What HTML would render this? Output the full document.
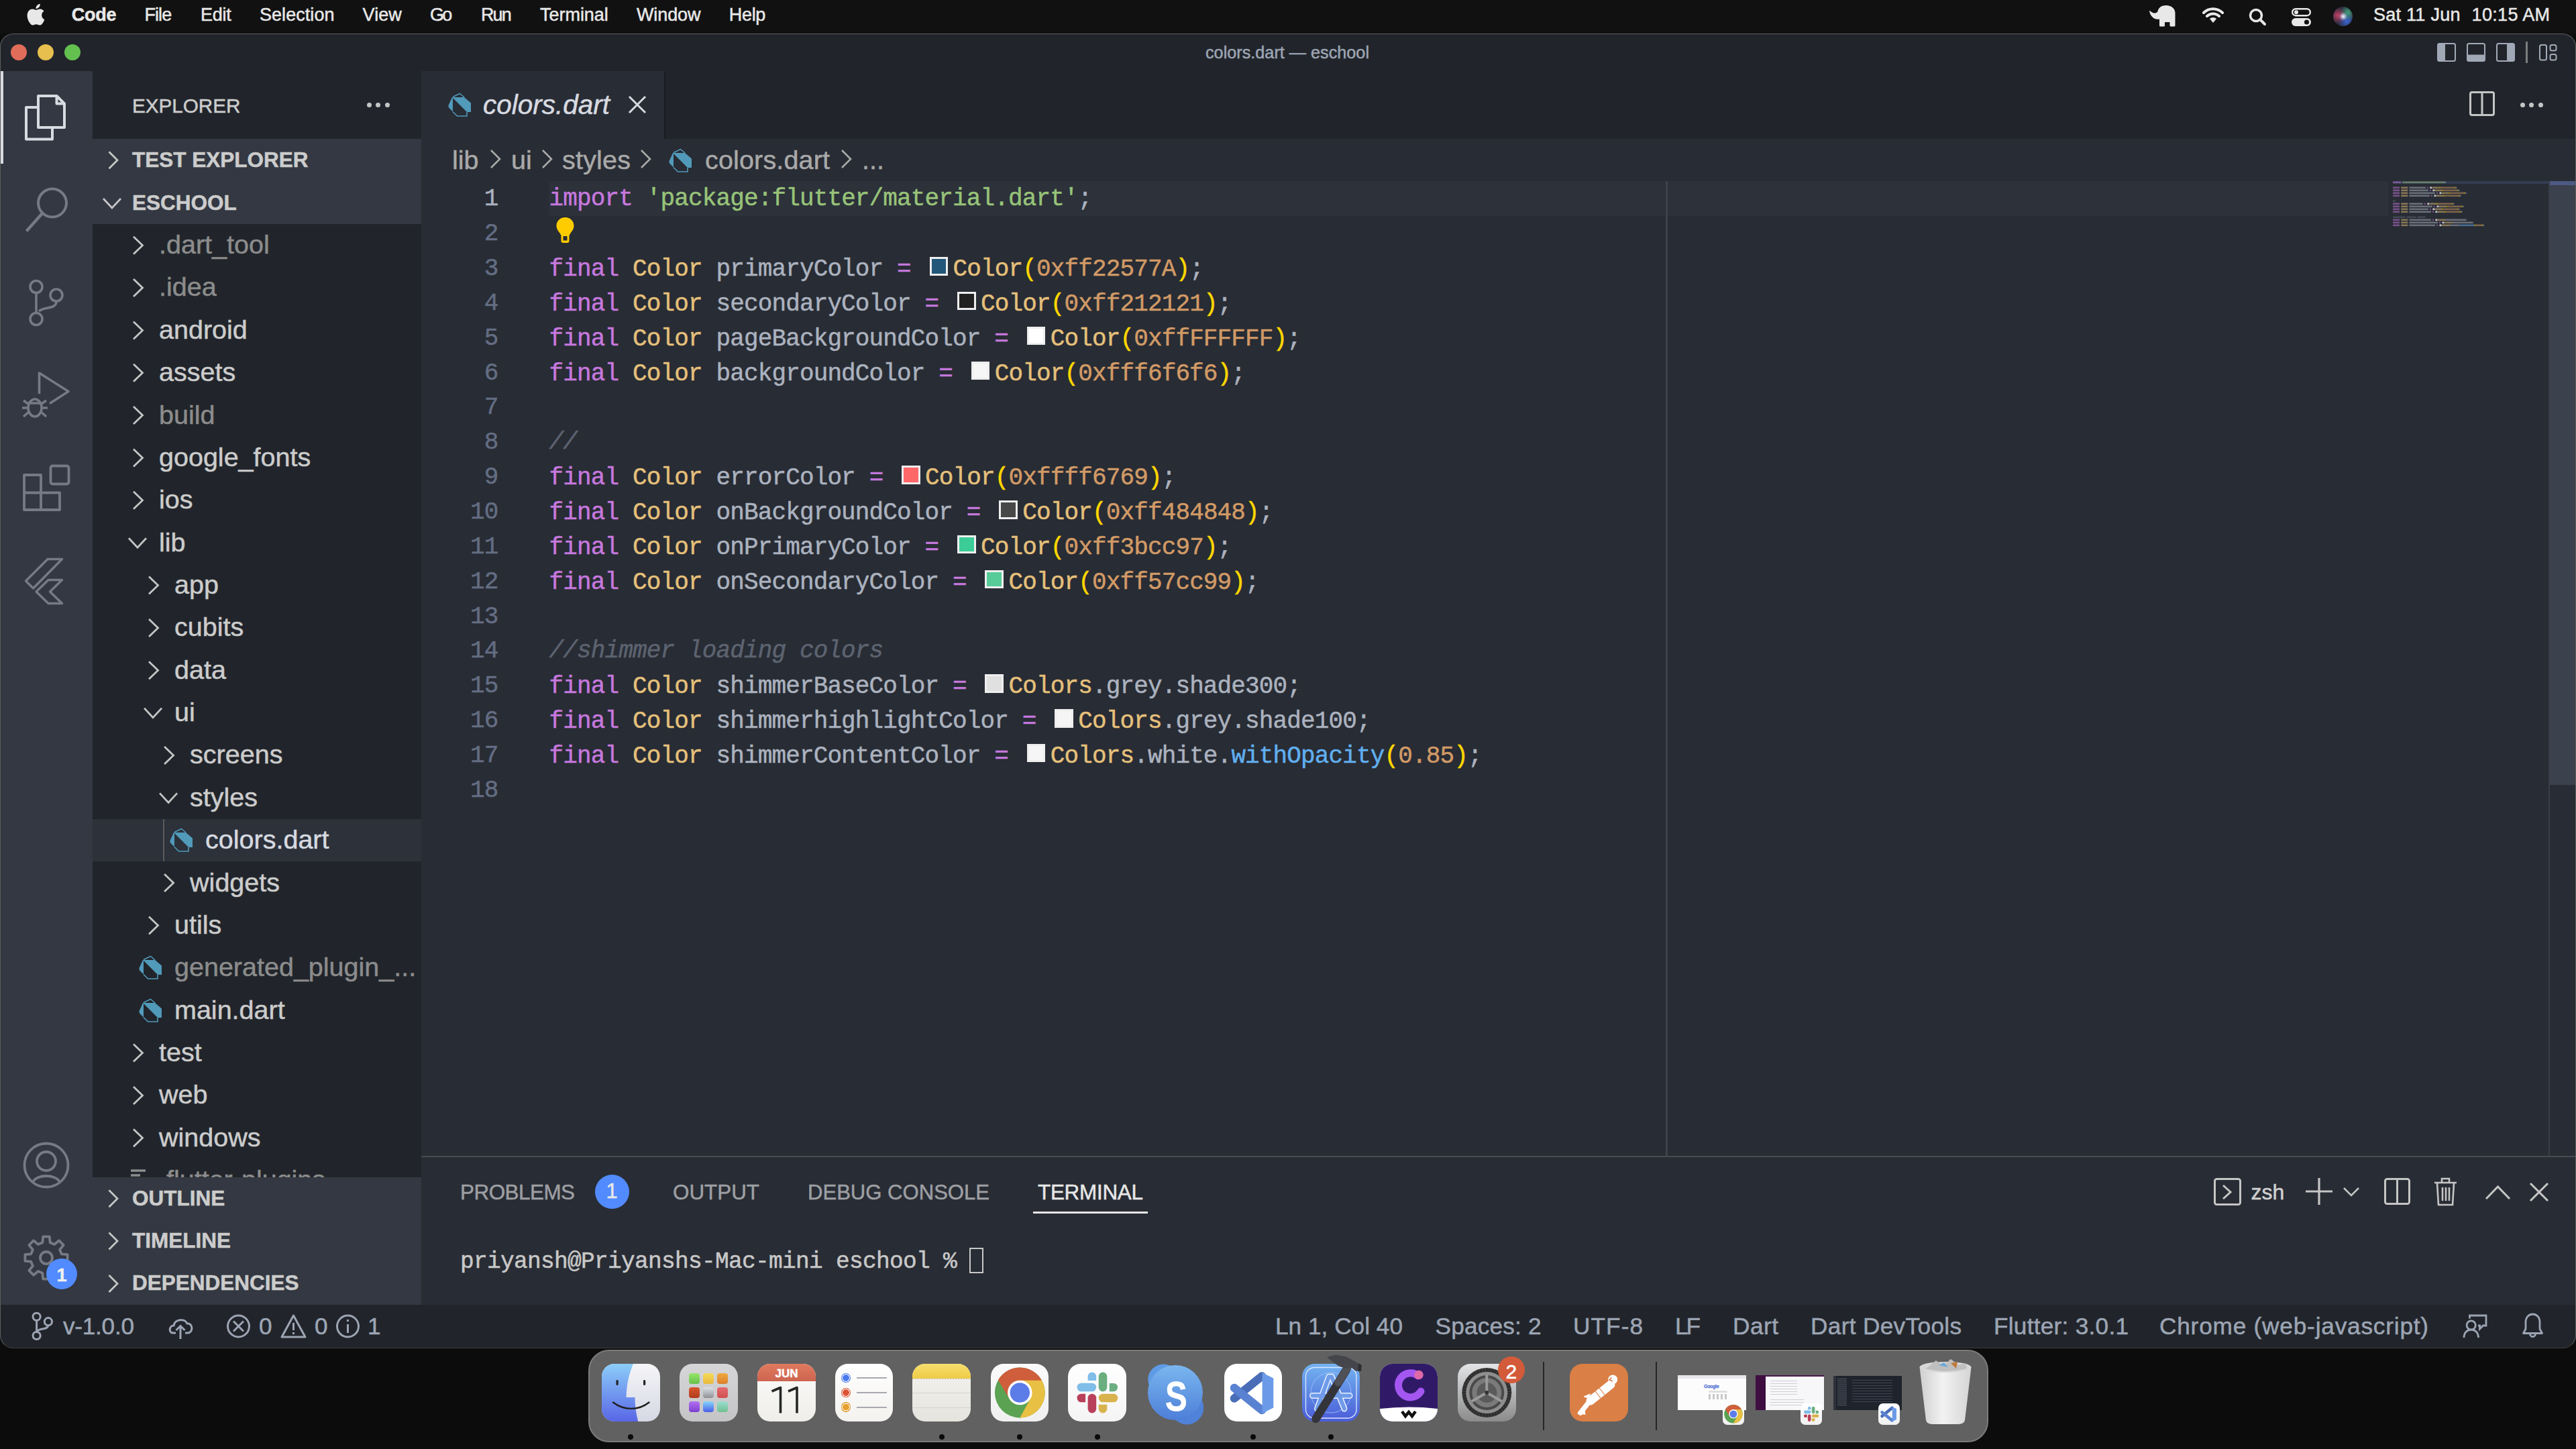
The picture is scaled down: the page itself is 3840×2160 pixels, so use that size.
<!DOCTYPE html><html><head><meta charset="utf-8"><title>VS Code</title><style>
*{box-sizing:border-box;margin:0;padding:0}
html,body{width:3840px;height:2160px;overflow:hidden;background:#0c0c0c;font-family:'Liberation Sans', sans-serif}
.a{position:absolute}
.t{position:absolute;white-space:pre;line-height:1;-webkit-text-stroke-width:0.5px}
svg{position:absolute;overflow:visible}
</style></head><body>
<div class="a" style="left:0;top:0;width:3840px;height:50px;background:#111111"></div>
<div class="t" style="left:106.7px;top:9.2px;font-size:27px;color:#e8e8e8;font-weight:bold;font-style:normal;font-family:'Liberation Sans', sans-serif;letter-spacing:-0.23px;">Code</div>
<div class="t" style="left:215.5px;top:9.2px;font-size:27px;color:#e8e8e8;font-weight:normal;font-style:normal;font-family:'Liberation Sans', sans-serif;letter-spacing:-0.94px;">File</div>
<div class="t" style="left:299.0px;top:9.2px;font-size:27px;color:#e8e8e8;font-weight:normal;font-style:normal;font-family:'Liberation Sans', sans-serif;letter-spacing:-0.28px;">Edit</div>
<div class="t" style="left:387.0px;top:9.2px;font-size:27px;color:#e8e8e8;font-weight:normal;font-style:normal;font-family:'Liberation Sans', sans-serif;letter-spacing:0.05px;">Selection</div>
<div class="t" style="left:540.6px;top:9.2px;font-size:27px;color:#e8e8e8;font-weight:normal;font-style:normal;font-family:'Liberation Sans', sans-serif;letter-spacing:0.05px;">View</div>
<div class="t" style="left:641.0px;top:9.2px;font-size:27px;color:#e8e8e8;font-weight:normal;font-style:normal;font-family:'Liberation Sans', sans-serif;letter-spacing:-2.73px;">Go</div>
<div class="t" style="left:717.0px;top:9.2px;font-size:27px;color:#e8e8e8;font-weight:normal;font-style:normal;font-family:'Liberation Sans', sans-serif;letter-spacing:-1.92px;">Run</div>
<div class="t" style="left:805.0px;top:9.2px;font-size:27px;color:#e8e8e8;font-weight:normal;font-style:normal;font-family:'Liberation Sans', sans-serif;letter-spacing:-0.03px;">Terminal</div>
<div class="t" style="left:949.0px;top:9.2px;font-size:27px;color:#e8e8e8;font-weight:normal;font-style:normal;font-family:'Liberation Sans', sans-serif;letter-spacing:-0.11px;">Window</div>
<div class="t" style="left:1086.7px;top:9.2px;font-size:27px;color:#e8e8e8;font-weight:normal;font-style:normal;font-family:'Liberation Sans', sans-serif;letter-spacing:-0.28px;">Help</div>
<svg style="left:39px;top:5px" width="28" height="33" viewBox="0 0 28 33"><path fill="#e8e8e8" d="M23.2 17.6c0-4 3.3-5.9 3.4-6-1.9-2.7-4.8-3.1-5.8-3.1-2.5-.3-4.8 1.4-6.1 1.4-1.3 0-3.2-1.4-5.2-1.3-2.7 0-5.2 1.6-6.6 4-2.8 4.9-.7 12.1 2 16 1.3 1.9 2.9 4.1 5 4 2-.1 2.8-1.3 5.2-1.3 2.4 0 3.1 1.3 5.2 1.3 2.2 0 3.5-1.9 4.8-3.9 1.5-2.2 2.1-4.4 2.2-4.5-.1 0-4.1-1.6-4.1-6.6zM19.2 5.8c1.1-1.3 1.8-3.2 1.6-5-1.6.1-3.5 1.1-4.7 2.4-1 1.2-1.9 3-1.7 4.8 1.8.1 3.6-.9 4.8-2.2z"/></svg>
<div class="t" style="left:3538.0px;top:9.2px;font-size:27px;color:#e8e8e8;font-weight:normal;font-style:normal;font-family:'Liberation Sans', sans-serif;letter-spacing:0.26px;">Sat 11 Jun</div>
<div class="t" style="left:3684.6px;top:9.2px;font-size:27px;color:#e8e8e8;font-weight:normal;font-style:normal;font-family:'Liberation Sans', sans-serif;letter-spacing:0.33px;">10:15 AM</div>
<svg style="left:3204px;top:7px" width="40" height="33" viewBox="0 0 40 33"><path fill="#e8e8e8" d="M1.5 9.5 C0.5 8.5 0 9 0.3 10.5 C2 18 8 23 15 21.5 V31 Q15 32.5 16.5 32.5 H21.5 Q23 32.5 23 31 V26 H30.5 V31 Q30.5 32.5 32 32.5 H37 Q38.5 32.5 38.5 31 V15 C39.5 6 33 1 25 1 C17 1 13.5 5 12.5 10 C11 13 6 14 1.5 9.5 Z"/></svg>
<svg style="left:3282px;top:10px" width="34" height="26" viewBox="0 0 34 26"><path fill="none" stroke="#e8e8e8" stroke-width="4" stroke-linecap="round" d="M3 9a20 20 0 0 1 28 0M8 14a13 13 0 0 1 18 0"/><path fill="#e8e8e8" d="M12 18a7 7 0 0 1 10 0l-5 6z"/></svg>
<svg style="left:3352px;top:12px" width="28" height="26" viewBox="0 0 28 26"><circle cx="11" cy="11" r="8.5" fill="none" stroke="#e8e8e8" stroke-width="3.5"/><path d="M17 17l7 7" stroke="#e8e8e8" stroke-width="4" stroke-linecap="round"/></svg>
<svg style="left:3416px;top:12px" width="29" height="27" viewBox="0 0 29 27"><rect x="1.2" y="1.2" width="26.6" height="10" rx="5" fill="none" stroke="#e8e8e8" stroke-width="2.4"/><circle cx="7" cy="6.2" r="3" fill="#e8e8e8"/><rect x="0" y="15" width="29" height="12" rx="6" fill="#e8e8e8"/><circle cx="22.5" cy="21" r="3.6" fill="#111"/></svg>
<div class="a" style="left:3478px;top:10px;width:29px;height:29px;border-radius:50%;background:radial-gradient(circle at 52% 50%,rgba(255,255,255,.95) 0,rgba(220,230,255,.6) 14%,rgba(0,0,0,0) 30%),radial-gradient(circle at 25% 45%,rgba(220,70,110,.85) 0,rgba(0,0,0,0) 45%),radial-gradient(circle at 75% 30%,rgba(70,190,140,.8) 0,rgba(0,0,0,0) 40%),radial-gradient(circle at 70% 75%,rgba(60,110,230,.9) 0,rgba(0,0,0,0) 45%),#2a2a3a"></div>
<div class="a" style="left:0;top:50px;width:3840px;height:1960px;border-radius:20px;overflow:hidden"><div class="a" style="left:0;top:-50px;width:3840px;height:2160px">
<div class="a" style="left:0;top:50px;width:3840px;height:1960px;background:#21252b"></div>
<div class="a" style="left:16px;top:66px;width:24px;height:24px;border-radius:50%;background:#e06c5a"></div>
<div class="a" style="left:56px;top:66px;width:24px;height:24px;border-radius:50%;background:#e6bf4e"></div>
<div class="a" style="left:96px;top:66px;width:24px;height:24px;border-radius:50%;background:#64c04f"></div>
<div class="t" style="left:1797.0px;top:65.7px;font-size:25.2px;color:#9da5b4;font-weight:normal;font-style:normal;font-family:'Liberation Sans', sans-serif;letter-spacing:0.02px;">colors.dart — eschool</div>
<svg style="left:3633px;top:64px" width="28" height="28" viewBox="0 0 28 28"><rect x="1" y="1" width="26" height="26" rx="2.5" fill="none" stroke="#a3aab8" stroke-width="2"/><rect x="1" y="1" width="11" height="26" rx="2" fill="#a0a7b5"/></svg>
<svg style="left:3677px;top:64px" width="28" height="28" viewBox="0 0 28 28"><rect x="1" y="1" width="26" height="26" rx="2.5" fill="none" stroke="#a3aab8" stroke-width="2"/><rect x="1" y="17.5" width="26" height="9.5" rx="2" fill="#a0a7b5"/></svg>
<svg style="left:3721px;top:64px" width="28" height="28" viewBox="0 0 28 28"><rect x="1" y="1" width="26" height="26" rx="2.5" fill="none" stroke="#a3aab8" stroke-width="2"/><rect x="16" y="1" width="11" height="26" rx="2" fill="#a0a7b5"/></svg>
<div class="a" style="left:3765px;top:62px;width:2.5px;height:32px;background:#7c7c7c"></div>
<svg style="left:3785px;top:66px" width="27" height="25" viewBox="0 0 27 25"><g fill="none" stroke="#a3aab8" stroke-width="2"><rect x="1" y="1" width="10" height="22.5" rx="2.5"/><rect x="16.5" y="1" width="9" height="8.5" rx="2.5"/><rect x="16.5" y="15" width="9" height="8.5" rx="2.5"/></g></svg>
<div class="a" style="left:0;top:106px;width:138px;height:1839px;background:#333842"></div>
<div class="a" style="left:0;top:106px;width:5px;height:138px;background:#d7dae0"></div>
<svg style="left:0;top:0" width="3840" height="2160" viewBox="0 0 3840 2160">
<g fill="none" stroke-width="4" stroke-linejoin="round">
<path stroke="#d7dae0" d="M55 160 H39 V207.5 H78 V192 M57 143 H84.5 L96 154.5 V190 H57 Z M84.5 143 V154.5 H96"/>
<circle stroke="#757a84" cx="78" cy="302.6" r="21"/>
<path stroke="#757a84" d="M63.5 317.5 L39.5 344.5" stroke-width="4.5"/>
<g stroke="#757a84" stroke-width="3.6"><circle cx="54" cy="427.5" r="9"/><circle cx="84" cy="440" r="9"/><circle cx="54" cy="475.5" r="9"/>
<path d="M54 436.5 V466.5 M84 449 C84 462 66 456 58 464"/></g>
<g stroke="#757a84" stroke-width="3.6"><path d="M58.5 587 V556 L102 583.5 L74 601.5"/>
<ellipse cx="52" cy="608" rx="10" ry="13"/><path d="M42 601 H62 M35 597 L42 602 M69 597 L62 602 M33 608 H42 M62 608 H71 M35 621 L43 614 M69 621 L61 614"/></g>
<g stroke="#757a84" stroke-width="3.8"><rect x="75.5" y="694.5" width="27" height="27" rx="3"/>
<path d="M36 708 H61 V734.5 H89 V760 H36 Z M36 734.5 H61 V760"/></g>
<g stroke="#757a84" stroke-width="3.5"><path d="M71 833.5 H92.5 L49.5 877 L38.5 866 Z M72 864.5 H92.5 L74.5 882 L92.5 899.5 H72 L54 882 Z"/></g>
<g stroke="#757a84" stroke-width="3.8"><circle cx="69" cy="1737" r="32.5"/><circle cx="69" cy="1731" r="14"/><path d="M49 1762 C55 1750 83 1750 89 1762"/></g>
</g>
<path d="M91.8 1869.3 L100.6 1870.2 L100.6 1879.8 L91.8 1880.7 L89.1 1887.1 L94.7 1894.0 L88.0 1900.7 L81.1 1895.1 L74.7 1897.8 L73.8 1906.6 L64.2 1906.6 L63.3 1897.8 L56.9 1895.1 L50.0 1900.7 L43.3 1894.0 L48.9 1887.1 L46.2 1880.7 L37.4 1879.8 L37.4 1870.2 L46.2 1869.3 L48.9 1862.9 L43.3 1856.0 L50.0 1849.3 L56.9 1854.9 L63.3 1852.2 L64.2 1843.4 L73.8 1843.4 L74.7 1852.2 L81.1 1854.9 L88.0 1849.3 L94.7 1856.0 L89.1 1862.9 Z" fill="none" stroke="#757a84" stroke-width="3.8" stroke-linejoin="round"/><circle cx="69" cy="1875" r="9" fill="none" stroke="#757a84" stroke-width="3.8"/>
</svg>
<div class="a" style="left:69px;top:1876px;width:46px;height:46px;border-radius:50%;background:#528bff"></div>
<div class="t" style="left:84.5px;top:1888.1px;font-size:27px;color:#f0f0f0;font-weight:bold;font-style:normal;font-family:'Liberation Sans', sans-serif;">1</div>
<div class="a" style="left:138px;top:106px;width:490px;height:1839px;background:#21252b"></div>
<div class="t" style="left:197.0px;top:143.4px;font-size:29.7px;color:#cccccc;font-weight:normal;font-style:normal;font-family:'Liberation Sans', sans-serif;letter-spacing:-0.03px;">EXPLORER</div>
<div class="a" style="left:546.5px;top:152.5px;width:7px;height:7px;border-radius:50%;background:#c5c5c5"></div>
<div class="a" style="left:560.0px;top:152.5px;width:7px;height:7px;border-radius:50%;background:#c5c5c5"></div>
<div class="a" style="left:573.5px;top:152.5px;width:7px;height:7px;border-radius:50%;background:#c5c5c5"></div>
<div class="a" style="left:138px;top:207px;width:490px;height:127px;background:#333842"></div>
<div class="t" style="left:197.0px;top:223.3px;font-size:31.5px;color:#cccccc;font-weight:bold;font-style:normal;font-family:'Liberation Sans', sans-serif;">TEST EXPLORER</div>
<div class="t" style="left:197.0px;top:286.8px;font-size:31.5px;color:#cccccc;font-weight:bold;font-style:normal;font-family:'Liberation Sans', sans-serif;">ESCHOOL</div>
<div class="a" style="left:0;top:0;width:3840px;height:1755px;overflow:hidden">
<div class="a" style="left:138px;top:1221.0px;width:490px;height:63.4px;background:#2c313a"></div>
<div class="a" style="left:243px;top:1221.0px;width:2px;height:63.4px;background:#5a5a58"></div>
<div class="t" style="left:237.0px;top:345.1px;font-size:39.5px;color:#8c8c8c;font-weight:normal;font-style:normal;font-family:'Liberation Sans', sans-serif;">.dart_tool</div>
<div class="t" style="left:237.0px;top:408.4px;font-size:39.5px;color:#8c8c8c;font-weight:normal;font-style:normal;font-family:'Liberation Sans', sans-serif;">.idea</div>
<div class="t" style="left:237.0px;top:471.8px;font-size:39.5px;color:#cccccc;font-weight:normal;font-style:normal;font-family:'Liberation Sans', sans-serif;">android</div>
<div class="t" style="left:237.0px;top:535.1px;font-size:39.5px;color:#cccccc;font-weight:normal;font-style:normal;font-family:'Liberation Sans', sans-serif;">assets</div>
<div class="t" style="left:237.0px;top:598.5px;font-size:39.5px;color:#8c8c8c;font-weight:normal;font-style:normal;font-family:'Liberation Sans', sans-serif;">build</div>
<div class="t" style="left:237.0px;top:661.9px;font-size:39.5px;color:#cccccc;font-weight:normal;font-style:normal;font-family:'Liberation Sans', sans-serif;">google_fonts</div>
<div class="t" style="left:237.0px;top:725.2px;font-size:39.5px;color:#cccccc;font-weight:normal;font-style:normal;font-family:'Liberation Sans', sans-serif;">ios</div>
<div class="t" style="left:237.0px;top:788.6px;font-size:39.5px;color:#cccccc;font-weight:normal;font-style:normal;font-family:'Liberation Sans', sans-serif;">lib</div>
<div class="t" style="left:260.0px;top:851.9px;font-size:39.5px;color:#cccccc;font-weight:normal;font-style:normal;font-family:'Liberation Sans', sans-serif;">app</div>
<div class="t" style="left:260.0px;top:915.3px;font-size:39.5px;color:#cccccc;font-weight:normal;font-style:normal;font-family:'Liberation Sans', sans-serif;">cubits</div>
<div class="t" style="left:260.0px;top:978.7px;font-size:39.5px;color:#cccccc;font-weight:normal;font-style:normal;font-family:'Liberation Sans', sans-serif;">data</div>
<div class="t" style="left:260.0px;top:1042.0px;font-size:39.5px;color:#cccccc;font-weight:normal;font-style:normal;font-family:'Liberation Sans', sans-serif;">ui</div>
<div class="t" style="left:283.1px;top:1105.4px;font-size:39.5px;color:#cccccc;font-weight:normal;font-style:normal;font-family:'Liberation Sans', sans-serif;">screens</div>
<div class="t" style="left:283.1px;top:1168.7px;font-size:39.5px;color:#cccccc;font-weight:normal;font-style:normal;font-family:'Liberation Sans', sans-serif;">styles</div>
<div class="t" style="left:306.1px;top:1232.1px;font-size:39.5px;color:#d7dae0;font-weight:normal;font-style:normal;font-family:'Liberation Sans', sans-serif;">colors.dart</div>
<div class="t" style="left:283.1px;top:1295.5px;font-size:39.5px;color:#cccccc;font-weight:normal;font-style:normal;font-family:'Liberation Sans', sans-serif;">widgets</div>
<div class="t" style="left:260.0px;top:1358.8px;font-size:39.5px;color:#cccccc;font-weight:normal;font-style:normal;font-family:'Liberation Sans', sans-serif;">utils</div>
<div class="t" style="left:260.0px;top:1422.2px;font-size:39.5px;color:#8c8c8c;font-weight:normal;font-style:normal;font-family:'Liberation Sans', sans-serif;">generated_plugin_...</div>
<div class="t" style="left:260.0px;top:1485.5px;font-size:39.5px;color:#cccccc;font-weight:normal;font-style:normal;font-family:'Liberation Sans', sans-serif;">main.dart</div>
<div class="t" style="left:237.0px;top:1548.9px;font-size:39.5px;color:#cccccc;font-weight:normal;font-style:normal;font-family:'Liberation Sans', sans-serif;">test</div>
<div class="t" style="left:237.0px;top:1612.3px;font-size:39.5px;color:#cccccc;font-weight:normal;font-style:normal;font-family:'Liberation Sans', sans-serif;">web</div>
<div class="t" style="left:237.0px;top:1675.6px;font-size:39.5px;color:#cccccc;font-weight:normal;font-style:normal;font-family:'Liberation Sans', sans-serif;">windows</div>
<div class="t" style="left:237.0px;top:1739.0px;font-size:39.5px;color:#8c8c8c;font-weight:normal;font-style:normal;font-family:'Liberation Sans', sans-serif;">.flutter-plugins</div>
<svg style="left:195px;top:1741.9px" width="24" height="30" viewBox="0 0 24 30"><path d="M0 3 H22 M0 10 H14 M0 17 H22" stroke="#8c8c8c" stroke-width="3.5"/></svg>
<svg style="left:0;top:0" width="3840" height="2160"><path d="M162.5 226.2 L175.0 238.7 L162.5 251.2 M154 296 L167 310 L180 296 M199.0 352.7 L212.5 365.7 L199.0 378.7 M199.0 416.0 L212.5 429.0 L199.0 442.0 M199.0 479.4 L212.5 492.4 L199.0 505.4 M199.0 542.8 L212.5 555.8 L199.0 568.8 M199.0 606.1 L212.5 619.1 L199.0 632.1 M199.0 669.5 L212.5 682.5 L199.0 695.5 M199.0 732.8 L212.5 745.8 L199.0 758.8 M192.0 802.2 L205.0 816.2 L218.0 802.2 M222.04 859.6 L235.54 872.6 L222.04 885.6 M222.04 922.9 L235.54 935.9 L222.04 948.9 M222.04 986.3 L235.54 999.3 L222.04 1012.3 M215.04 1055.6 L228.04 1069.6 L241.04 1055.6 M245.07999999999998 1113.0 L258.58 1126.0 L245.07999999999998 1139.0 M238.07999999999998 1182.4 L251.07999999999998 1196.4 L264.08 1182.4 M245.07999999999998 1303.1 L258.58 1316.1 L245.07999999999998 1329.1 M222.04 1366.4 L235.54 1379.4 L222.04 1392.4 M199.0 1556.5 L212.5 1569.5 L199.0 1582.5 M199.0 1619.9 L212.5 1632.9 L199.0 1645.9 M199.0 1683.2 L212.5 1696.2 L199.0 1709.2" fill="none" stroke="#c5c5c5" stroke-width="2.8" stroke-linejoin="miter"/></svg>
</div>
<div class="a" style="left:138px;top:1755px;width:490px;height:190px;background:#333842"></div>
<div class="t" style="left:197.0px;top:1771.3px;font-size:31.5px;color:#cccccc;font-weight:bold;font-style:normal;font-family:'Liberation Sans', sans-serif;">OUTLINE</div>
<div class="t" style="left:197.0px;top:1834.3px;font-size:31.5px;color:#cccccc;font-weight:bold;font-style:normal;font-family:'Liberation Sans', sans-serif;">TIMELINE</div>
<div class="t" style="left:197.0px;top:1897.3px;font-size:31.5px;color:#cccccc;font-weight:bold;font-style:normal;font-family:'Liberation Sans', sans-serif;">DEPENDENCIES</div>
<svg style="left:0;top:0" width="3840" height="2160"><path d="M162.5 1774.2 L175 1786.7 L162.5 1799.2 M162.5 1837.5 L175 1850 L162.5 1862.5 M162.5 1900.9 L175 1913.4 L162.5 1925.9" fill="none" stroke="#c5c5c5" stroke-width="2.8"/></svg>
<svg style="left:253.1px;top:1235.0px" width="34.0" height="34.0" viewBox="0 0 34 34"><path fill="#519aba" d="M6 6 L24 6 L34 14.5 L34 28 L28 28 L7 7 Z M6 6 L0.5 18 Q0 20 1.5 22 L7 27.5 L7 7 Z"/><path fill="none" stroke="#519aba" stroke-width="1.6" stroke-linejoin="round" d="M7 27.5 L13.5 34 L28 34 L28 28 M7 5.5 L17.5 0.5 L24 6"/></svg>
<svg style="left:207.0px;top:1425.1px" width="34.0" height="34.0" viewBox="0 0 34 34"><path fill="#519aba" d="M6 6 L24 6 L34 14.5 L34 28 L28 28 L7 7 Z M6 6 L0.5 18 Q0 20 1.5 22 L7 27.5 L7 7 Z"/><path fill="none" stroke="#519aba" stroke-width="1.6" stroke-linejoin="round" d="M7 27.5 L13.5 34 L28 34 L28 28 M7 5.5 L17.5 0.5 L24 6"/></svg>
<svg style="left:207.0px;top:1488.5px" width="34.0" height="34.0" viewBox="0 0 34 34"><path fill="#519aba" d="M6 6 L24 6 L34 14.5 L34 28 L28 28 L7 7 Z M6 6 L0.5 18 Q0 20 1.5 22 L7 27.5 L7 7 Z"/><path fill="none" stroke="#519aba" stroke-width="1.6" stroke-linejoin="round" d="M7 27.5 L13.5 34 L28 34 L28 28 M7 5.5 L17.5 0.5 L24 6"/></svg>
<div class="a" style="left:628px;top:106px;width:3212px;height:101px;background:#21252b"></div>
<div class="a" style="left:628px;top:106px;width:363px;height:101px;background:#282c34"></div>
<div class="a" style="left:990px;top:106px;width:2px;height:101px;background:#181a1f"></div>
<svg style="left:668.0px;top:139.0px" width="34.0" height="34.0" viewBox="0 0 34 34"><path fill="#519aba" d="M6 6 L24 6 L34 14.5 L34 28 L28 28 L7 7 Z M6 6 L0.5 18 Q0 20 1.5 22 L7 27.5 L7 7 Z"/><path fill="none" stroke="#519aba" stroke-width="1.6" stroke-linejoin="round" d="M7 27.5 L13.5 34 L28 34 L28 28 M7 5.5 L17.5 0.5 L24 6"/></svg>
<div class="t" style="left:720.0px;top:136.2px;font-size:40.5px;color:#d7dae0;font-weight:normal;font-style:italic;font-family:'Liberation Sans', sans-serif;letter-spacing:-0.01px;">colors.dart</div>
<svg style="left:936px;top:142px" width="28" height="28" viewBox="0 0 28 28"><path d="M2 2 L26 26 M26 2 L2 26" stroke="#d7dae0" stroke-width="3"/></svg>
<svg style="left:3681px;top:136px" width="38" height="37" viewBox="0 0 38 37"><rect x="1.5" y="1.5" width="35" height="34" rx="2.5" fill="none" stroke="#c5c5c5" stroke-width="3"/><path d="M19 2 V35" stroke="#c5c5c5" stroke-width="3"/></svg>
<div class="a" style="left:3756.5px;top:152.5px;width:7px;height:7px;border-radius:50%;background:#c5c5c5"></div>
<div class="a" style="left:3770.0px;top:152.5px;width:7px;height:7px;border-radius:50%;background:#c5c5c5"></div>
<div class="a" style="left:3783.5px;top:152.5px;width:7px;height:7px;border-radius:50%;background:#c5c5c5"></div>
<div class="a" style="left:628px;top:207px;width:3212px;height:1516px;background:#282c34"></div>
<div class="t" style="left:674.0px;top:218.6px;font-size:39.5px;color:#a9a9a9;font-weight:normal;font-style:normal;font-family:'Liberation Sans', sans-serif;">lib</div>
<div class="t" style="left:762.0px;top:218.6px;font-size:39.5px;color:#a9a9a9;font-weight:normal;font-style:normal;font-family:'Liberation Sans', sans-serif;">ui</div>
<div class="t" style="left:838.0px;top:218.6px;font-size:39.5px;color:#a9a9a9;font-weight:normal;font-style:normal;font-family:'Liberation Sans', sans-serif;letter-spacing:0.21px;">styles</div>
<svg style="left:997.0px;top:222.0px" width="34.0" height="34.0" viewBox="0 0 34 34"><path fill="#519aba" d="M6 6 L24 6 L34 14.5 L34 28 L28 28 L7 7 Z M6 6 L0.5 18 Q0 20 1.5 22 L7 27.5 L7 7 Z"/><path fill="none" stroke="#519aba" stroke-width="1.6" stroke-linejoin="round" d="M7 27.5 L13.5 34 L28 34 L28 28 M7 5.5 L17.5 0.5 L24 6"/></svg>
<div class="t" style="left:1051.0px;top:218.6px;font-size:39.5px;color:#a9a9a9;font-weight:normal;font-style:normal;font-family:'Liberation Sans', sans-serif;letter-spacing:0.16px;">colors.dart</div>
<div class="t" style="left:1285.0px;top:218.6px;font-size:39.5px;color:#a9a9a9;font-weight:normal;font-style:normal;font-family:'Liberation Sans', sans-serif;">...</div>
<svg style="left:0;top:0" width="3840" height="2160"><path d="M732 224 L745 237 L732 250 M809 224 L822 237 L809 250 M956 224 L969 237 L956 250 M1255 224 L1268 237 L1255 250" fill="none" stroke="#a9a9a9" stroke-width="2.6"/></svg>
<div class="a" style="left:818px;top:270px;width:2742px;height:52px;background:#2c313a"></div>
<div class="t" style="left:721.8px;top:279.4px;font-family:'Liberation Mono', monospace;font-size:36px;letter-spacing:-0.86px;color:#abb2bf">1</div>
<div class="t" style="left:818.5px;top:279.4px;font-family:'Liberation Mono', monospace;font-size:36px;letter-spacing:-0.86px;color:#abb2bf"><span style="color:#c678dd;">import</span><span style="color:#abb2bf;"> </span><span style="color:#98c379;">&#x27;package:flutter/material.dart&#x27;</span><span style="color:#abb2bf;">;</span></div>
<div class="t" style="left:721.8px;top:331.2px;font-family:'Liberation Mono', monospace;font-size:36px;letter-spacing:-0.86px;color:#636d83">2</div>
<div class="t" style="left:721.8px;top:383.1px;font-family:'Liberation Mono', monospace;font-size:36px;letter-spacing:-0.86px;color:#636d83">3</div>
<div class="t" style="left:818.5px;top:383.1px;font-family:'Liberation Mono', monospace;font-size:36px;letter-spacing:-0.86px;color:#abb2bf"><span style="color:#c678dd;">final</span><span style="color:#abb2bf;"> </span><span style="color:#e5c07b;">Color</span><span style="color:#abb2bf;"> primaryColor </span><span style="color:#c678dd;">=</span><span style="color:#abb2bf;"> </span><span style="display:inline-block;width:27.6px;height:27.6px;border:3.46px solid #eeeeee;background:#22577A;margin:0 7.4px 0 6.9px;vertical-align:baseline;letter-spacing:0"></span><span style="color:#e5c07b;">Color</span><span style="color:#ffd700;">(</span><span style="color:#d19a66;">0xff22577A</span><span style="color:#ffd700;">)</span><span style="color:#abb2bf;">;</span></div>
<div class="t" style="left:721.8px;top:434.9px;font-family:'Liberation Mono', monospace;font-size:36px;letter-spacing:-0.86px;color:#636d83">4</div>
<div class="t" style="left:818.5px;top:434.9px;font-family:'Liberation Mono', monospace;font-size:36px;letter-spacing:-0.86px;color:#abb2bf"><span style="color:#c678dd;">final</span><span style="color:#abb2bf;"> </span><span style="color:#e5c07b;">Color</span><span style="color:#abb2bf;"> secondaryColor </span><span style="color:#c678dd;">=</span><span style="color:#abb2bf;"> </span><span style="display:inline-block;width:27.6px;height:27.6px;border:3.46px solid #eeeeee;background:#212121;margin:0 7.4px 0 6.9px;vertical-align:baseline;letter-spacing:0"></span><span style="color:#e5c07b;">Color</span><span style="color:#ffd700;">(</span><span style="color:#d19a66;">0xff212121</span><span style="color:#ffd700;">)</span><span style="color:#abb2bf;">;</span></div>
<div class="t" style="left:721.8px;top:486.8px;font-family:'Liberation Mono', monospace;font-size:36px;letter-spacing:-0.86px;color:#636d83">5</div>
<div class="t" style="left:818.5px;top:486.8px;font-family:'Liberation Mono', monospace;font-size:36px;letter-spacing:-0.86px;color:#abb2bf"><span style="color:#c678dd;">final</span><span style="color:#abb2bf;"> </span><span style="color:#e5c07b;">Color</span><span style="color:#abb2bf;"> pageBackgroundColor </span><span style="color:#c678dd;">=</span><span style="color:#abb2bf;"> </span><span style="display:inline-block;width:27.6px;height:27.6px;border:3.46px solid #eeeeee;background:#FFFFFF;margin:0 7.4px 0 6.9px;vertical-align:baseline;letter-spacing:0"></span><span style="color:#e5c07b;">Color</span><span style="color:#ffd700;">(</span><span style="color:#d19a66;">0xffFFFFFF</span><span style="color:#ffd700;">)</span><span style="color:#abb2bf;">;</span></div>
<div class="t" style="left:721.8px;top:538.6px;font-family:'Liberation Mono', monospace;font-size:36px;letter-spacing:-0.86px;color:#636d83">6</div>
<div class="t" style="left:818.5px;top:538.6px;font-family:'Liberation Mono', monospace;font-size:36px;letter-spacing:-0.86px;color:#abb2bf"><span style="color:#c678dd;">final</span><span style="color:#abb2bf;"> </span><span style="color:#e5c07b;">Color</span><span style="color:#abb2bf;"> backgroundColor </span><span style="color:#c678dd;">=</span><span style="color:#abb2bf;"> </span><span style="display:inline-block;width:27.6px;height:27.6px;border:3.46px solid #eeeeee;background:#f6f6f6;margin:0 7.4px 0 6.9px;vertical-align:baseline;letter-spacing:0"></span><span style="color:#e5c07b;">Color</span><span style="color:#ffd700;">(</span><span style="color:#d19a66;">0xfff6f6f6</span><span style="color:#ffd700;">)</span><span style="color:#abb2bf;">;</span></div>
<div class="t" style="left:721.8px;top:590.4px;font-family:'Liberation Mono', monospace;font-size:36px;letter-spacing:-0.86px;color:#636d83">7</div>
<div class="t" style="left:721.8px;top:642.3px;font-family:'Liberation Mono', monospace;font-size:36px;letter-spacing:-0.86px;color:#636d83">8</div>
<div class="t" style="left:818.5px;top:642.3px;font-family:'Liberation Mono', monospace;font-size:36px;letter-spacing:-0.86px;color:#abb2bf"><span style="color:#5c6370;font-style:italic">//</span></div>
<div class="t" style="left:721.8px;top:694.1px;font-family:'Liberation Mono', monospace;font-size:36px;letter-spacing:-0.86px;color:#636d83">9</div>
<div class="t" style="left:818.5px;top:694.1px;font-family:'Liberation Mono', monospace;font-size:36px;letter-spacing:-0.86px;color:#abb2bf"><span style="color:#c678dd;">final</span><span style="color:#abb2bf;"> </span><span style="color:#e5c07b;">Color</span><span style="color:#abb2bf;"> errorColor </span><span style="color:#c678dd;">=</span><span style="color:#abb2bf;"> </span><span style="display:inline-block;width:27.6px;height:27.6px;border:3.46px solid #eeeeee;background:#ff6769;margin:0 7.4px 0 6.9px;vertical-align:baseline;letter-spacing:0"></span><span style="color:#e5c07b;">Color</span><span style="color:#ffd700;">(</span><span style="color:#d19a66;">0xffff6769</span><span style="color:#ffd700;">)</span><span style="color:#abb2bf;">;</span></div>
<div class="t" style="left:701.0px;top:746.0px;font-family:'Liberation Mono', monospace;font-size:36px;letter-spacing:-0.86px;color:#636d83">10</div>
<div class="t" style="left:818.5px;top:746.0px;font-family:'Liberation Mono', monospace;font-size:36px;letter-spacing:-0.86px;color:#abb2bf"><span style="color:#c678dd;">final</span><span style="color:#abb2bf;"> </span><span style="color:#e5c07b;">Color</span><span style="color:#abb2bf;"> onBackgroundColor </span><span style="color:#c678dd;">=</span><span style="color:#abb2bf;"> </span><span style="display:inline-block;width:27.6px;height:27.6px;border:3.46px solid #eeeeee;background:#484848;margin:0 7.4px 0 6.9px;vertical-align:baseline;letter-spacing:0"></span><span style="color:#e5c07b;">Color</span><span style="color:#ffd700;">(</span><span style="color:#d19a66;">0xff484848</span><span style="color:#ffd700;">)</span><span style="color:#abb2bf;">;</span></div>
<div class="t" style="left:701.0px;top:797.8px;font-family:'Liberation Mono', monospace;font-size:36px;letter-spacing:-0.86px;color:#636d83">11</div>
<div class="t" style="left:818.5px;top:797.8px;font-family:'Liberation Mono', monospace;font-size:36px;letter-spacing:-0.86px;color:#abb2bf"><span style="color:#c678dd;">final</span><span style="color:#abb2bf;"> </span><span style="color:#e5c07b;">Color</span><span style="color:#abb2bf;"> onPrimaryColor </span><span style="color:#c678dd;">=</span><span style="color:#abb2bf;"> </span><span style="display:inline-block;width:27.6px;height:27.6px;border:3.46px solid #eeeeee;background:#3bcc97;margin:0 7.4px 0 6.9px;vertical-align:baseline;letter-spacing:0"></span><span style="color:#e5c07b;">Color</span><span style="color:#ffd700;">(</span><span style="color:#d19a66;">0xff3bcc97</span><span style="color:#ffd700;">)</span><span style="color:#abb2bf;">;</span></div>
<div class="t" style="left:701.0px;top:849.6px;font-family:'Liberation Mono', monospace;font-size:36px;letter-spacing:-0.86px;color:#636d83">12</div>
<div class="t" style="left:818.5px;top:849.6px;font-family:'Liberation Mono', monospace;font-size:36px;letter-spacing:-0.86px;color:#abb2bf"><span style="color:#c678dd;">final</span><span style="color:#abb2bf;"> </span><span style="color:#e5c07b;">Color</span><span style="color:#abb2bf;"> onSecondaryColor </span><span style="color:#c678dd;">=</span><span style="color:#abb2bf;"> </span><span style="display:inline-block;width:27.6px;height:27.6px;border:3.46px solid #eeeeee;background:#57cc99;margin:0 7.4px 0 6.9px;vertical-align:baseline;letter-spacing:0"></span><span style="color:#e5c07b;">Color</span><span style="color:#ffd700;">(</span><span style="color:#d19a66;">0xff57cc99</span><span style="color:#ffd700;">)</span><span style="color:#abb2bf;">;</span></div>
<div class="t" style="left:701.0px;top:901.5px;font-family:'Liberation Mono', monospace;font-size:36px;letter-spacing:-0.86px;color:#636d83">13</div>
<div class="t" style="left:701.0px;top:953.3px;font-family:'Liberation Mono', monospace;font-size:36px;letter-spacing:-0.86px;color:#636d83">14</div>
<div class="t" style="left:818.5px;top:953.3px;font-family:'Liberation Mono', monospace;font-size:36px;letter-spacing:-0.86px;color:#abb2bf"><span style="color:#5c6370;font-style:italic">//shimmer loading colors</span></div>
<div class="t" style="left:701.0px;top:1005.2px;font-family:'Liberation Mono', monospace;font-size:36px;letter-spacing:-0.86px;color:#636d83">15</div>
<div class="t" style="left:818.5px;top:1005.2px;font-family:'Liberation Mono', monospace;font-size:36px;letter-spacing:-0.86px;color:#abb2bf"><span style="color:#c678dd;">final</span><span style="color:#abb2bf;"> </span><span style="color:#e5c07b;">Color</span><span style="color:#abb2bf;"> shimmerBaseColor </span><span style="color:#c678dd;">=</span><span style="color:#abb2bf;"> </span><span style="display:inline-block;width:27.6px;height:27.6px;border:3.46px solid #eeeeee;background:#e0e0e0;margin:0 7.4px 0 6.9px;vertical-align:baseline;letter-spacing:0"></span><span style="color:#e5c07b;">Colors</span><span style="color:#abb2bf;">.grey.shade300;</span></div>
<div class="t" style="left:701.0px;top:1057.0px;font-family:'Liberation Mono', monospace;font-size:36px;letter-spacing:-0.86px;color:#636d83">16</div>
<div class="t" style="left:818.5px;top:1057.0px;font-family:'Liberation Mono', monospace;font-size:36px;letter-spacing:-0.86px;color:#abb2bf"><span style="color:#c678dd;">final</span><span style="color:#abb2bf;"> </span><span style="color:#e5c07b;">Color</span><span style="color:#abb2bf;"> shimmerhighlightColor </span><span style="color:#c678dd;">=</span><span style="color:#abb2bf;"> </span><span style="display:inline-block;width:27.6px;height:27.6px;border:3.46px solid #eeeeee;background:#f5f5f5;margin:0 7.4px 0 6.9px;vertical-align:baseline;letter-spacing:0"></span><span style="color:#e5c07b;">Colors</span><span style="color:#abb2bf;">.grey.shade100;</span></div>
<div class="t" style="left:701.0px;top:1108.8px;font-family:'Liberation Mono', monospace;font-size:36px;letter-spacing:-0.86px;color:#636d83">17</div>
<div class="t" style="left:818.5px;top:1108.8px;font-family:'Liberation Mono', monospace;font-size:36px;letter-spacing:-0.86px;color:#abb2bf"><span style="color:#c678dd;">final</span><span style="color:#abb2bf;"> </span><span style="color:#e5c07b;">Color</span><span style="color:#abb2bf;"> shimmerContentColor </span><span style="color:#c678dd;">=</span><span style="color:#abb2bf;"> </span><span style="display:inline-block;width:27.6px;height:27.6px;border:3.46px solid #eeeeee;background:#f6f6f6;margin:0 7.4px 0 6.9px;vertical-align:baseline;letter-spacing:0"></span><span style="color:#e5c07b;">Colors</span><span style="color:#abb2bf;">.white.</span><span style="color:#61afef;">withOpacity</span><span style="color:#ffd700;">(</span><span style="color:#d19a66;">0.85</span><span style="color:#ffd700;">)</span><span style="color:#abb2bf;">;</span></div>
<div class="t" style="left:701.0px;top:1160.7px;font-family:'Liberation Mono', monospace;font-size:36px;letter-spacing:-0.86px;color:#636d83">18</div>
<svg style="left:829px;top:324px" width="27" height="38" viewBox="0 0 27 38"><path fill="#ffcc00" d="M13.5 0 C21 0 26.5 5.5 26.5 12.5 C26.5 17 24 20 21.5 23.5 L19.5 27 V35 Q19.5 38 16.5 38 H10.5 Q7.5 38 7.5 35 V27 L5.5 23.5 C3 20 0.5 17 0.5 12.5 C0.5 5.5 6 0 13.5 0 Z M10.5 28 V34.5 H16.5 V28 Z"/></svg>
<div class="a" style="left:2483px;top:270px;width:3px;height:1453px;background:#3d424b"></div>
<div class="a" style="left:3567px;top:270px;width:232px;height:4px;background:#343c52"></div>
<svg style="left:0;top:0" width="3840" height="2160"><rect x="3567.0" y="270.5" width="12.2" height="2.6" fill="#c678dd" opacity="0.5"/><rect x="3581.2" y="270.5" width="62.9" height="2.6" fill="#98c379" opacity="0.5"/><rect x="3644.1" y="270.5" width="2.0" height="2.6" fill="#abb2bf" opacity="0.5"/><rect x="3567.0" y="278.5" width="10.1" height="2.6" fill="#c678dd" opacity="0.5"/><rect x="3579.2" y="278.5" width="10.1" height="2.6" fill="#e5c07b" opacity="0.5"/><rect x="3591.4" y="278.5" width="24.4" height="2.6" fill="#abb2bf" opacity="0.5"/><rect x="3617.8" y="278.5" width="2.0" height="2.6" fill="#c678dd" opacity="0.5"/><rect x="3622.3" y="278.5" width="3.0" height="2.6" fill="#dddddd" opacity="0.9"/><rect x="3625.8" y="278.5" width="10.1" height="2.6" fill="#e5c07b" opacity="0.5"/><rect x="3636.0" y="278.5" width="2.0" height="2.6" fill="#ffd700" opacity="0.5"/><rect x="3638.0" y="278.5" width="20.3" height="2.6" fill="#d19a66" opacity="0.5"/><rect x="3658.3" y="278.5" width="2.0" height="2.6" fill="#ffd700" opacity="0.5"/><rect x="3660.3" y="278.5" width="2.0" height="2.6" fill="#abb2bf" opacity="0.5"/><rect x="3567.0" y="282.5" width="10.1" height="2.6" fill="#c678dd" opacity="0.5"/><rect x="3579.2" y="282.5" width="10.1" height="2.6" fill="#e5c07b" opacity="0.5"/><rect x="3591.4" y="282.5" width="28.4" height="2.6" fill="#abb2bf" opacity="0.5"/><rect x="3621.8" y="282.5" width="2.0" height="2.6" fill="#c678dd" opacity="0.5"/><rect x="3626.4" y="282.5" width="3.0" height="2.6" fill="#dddddd" opacity="0.9"/><rect x="3629.9" y="282.5" width="10.1" height="2.6" fill="#e5c07b" opacity="0.5"/><rect x="3640.0" y="282.5" width="2.0" height="2.6" fill="#ffd700" opacity="0.5"/><rect x="3642.1" y="282.5" width="20.3" height="2.6" fill="#d19a66" opacity="0.5"/><rect x="3662.4" y="282.5" width="2.0" height="2.6" fill="#ffd700" opacity="0.5"/><rect x="3664.4" y="282.5" width="2.0" height="2.6" fill="#abb2bf" opacity="0.5"/><rect x="3567.0" y="286.5" width="10.1" height="2.6" fill="#c678dd" opacity="0.5"/><rect x="3579.2" y="286.5" width="10.1" height="2.6" fill="#e5c07b" opacity="0.5"/><rect x="3591.4" y="286.5" width="38.6" height="2.6" fill="#abb2bf" opacity="0.5"/><rect x="3632.0" y="286.5" width="2.0" height="2.6" fill="#c678dd" opacity="0.5"/><rect x="3636.5" y="286.5" width="3.0" height="2.6" fill="#dddddd" opacity="0.9"/><rect x="3640.0" y="286.5" width="10.1" height="2.6" fill="#e5c07b" opacity="0.5"/><rect x="3650.2" y="286.5" width="2.0" height="2.6" fill="#ffd700" opacity="0.5"/><rect x="3652.2" y="286.5" width="20.3" height="2.6" fill="#d19a66" opacity="0.5"/><rect x="3672.5" y="286.5" width="2.0" height="2.6" fill="#ffd700" opacity="0.5"/><rect x="3674.5" y="286.5" width="2.0" height="2.6" fill="#abb2bf" opacity="0.5"/><rect x="3567.0" y="290.5" width="10.1" height="2.6" fill="#c678dd" opacity="0.5"/><rect x="3579.2" y="290.5" width="10.1" height="2.6" fill="#e5c07b" opacity="0.5"/><rect x="3591.4" y="290.5" width="30.4" height="2.6" fill="#abb2bf" opacity="0.5"/><rect x="3623.8" y="290.5" width="2.0" height="2.6" fill="#c678dd" opacity="0.5"/><rect x="3628.4" y="290.5" width="3.0" height="2.6" fill="#dddddd" opacity="0.9"/><rect x="3631.9" y="290.5" width="10.1" height="2.6" fill="#e5c07b" opacity="0.5"/><rect x="3642.1" y="290.5" width="2.0" height="2.6" fill="#ffd700" opacity="0.5"/><rect x="3644.1" y="290.5" width="20.3" height="2.6" fill="#d19a66" opacity="0.5"/><rect x="3664.4" y="290.5" width="2.0" height="2.6" fill="#ffd700" opacity="0.5"/><rect x="3666.4" y="290.5" width="2.0" height="2.6" fill="#abb2bf" opacity="0.5"/><rect x="3567.0" y="298.5" width="4.1" height="2.6" fill="#5c6370" opacity="0.5"/><rect x="3567.0" y="302.5" width="10.1" height="2.6" fill="#c678dd" opacity="0.5"/><rect x="3579.2" y="302.5" width="10.1" height="2.6" fill="#e5c07b" opacity="0.5"/><rect x="3591.4" y="302.5" width="20.3" height="2.6" fill="#abb2bf" opacity="0.5"/><rect x="3613.7" y="302.5" width="2.0" height="2.6" fill="#c678dd" opacity="0.5"/><rect x="3618.3" y="302.5" width="3.0" height="2.6" fill="#dddddd" opacity="0.9"/><rect x="3621.8" y="302.5" width="10.1" height="2.6" fill="#e5c07b" opacity="0.5"/><rect x="3631.9" y="302.5" width="2.0" height="2.6" fill="#ffd700" opacity="0.5"/><rect x="3633.9" y="302.5" width="20.3" height="2.6" fill="#d19a66" opacity="0.5"/><rect x="3654.2" y="302.5" width="2.0" height="2.6" fill="#ffd700" opacity="0.5"/><rect x="3656.3" y="302.5" width="2.0" height="2.6" fill="#abb2bf" opacity="0.5"/><rect x="3567.0" y="306.5" width="10.1" height="2.6" fill="#c678dd" opacity="0.5"/><rect x="3579.2" y="306.5" width="10.1" height="2.6" fill="#e5c07b" opacity="0.5"/><rect x="3591.4" y="306.5" width="34.5" height="2.6" fill="#abb2bf" opacity="0.5"/><rect x="3627.9" y="306.5" width="2.0" height="2.6" fill="#c678dd" opacity="0.5"/><rect x="3632.5" y="306.5" width="3.0" height="2.6" fill="#dddddd" opacity="0.9"/><rect x="3636.0" y="306.5" width="10.1" height="2.6" fill="#e5c07b" opacity="0.5"/><rect x="3646.1" y="306.5" width="2.0" height="2.6" fill="#ffd700" opacity="0.5"/><rect x="3648.1" y="306.5" width="20.3" height="2.6" fill="#d19a66" opacity="0.5"/><rect x="3668.4" y="306.5" width="2.0" height="2.6" fill="#ffd700" opacity="0.5"/><rect x="3670.5" y="306.5" width="2.0" height="2.6" fill="#abb2bf" opacity="0.5"/><rect x="3567.0" y="310.5" width="10.1" height="2.6" fill="#c678dd" opacity="0.5"/><rect x="3579.2" y="310.5" width="10.1" height="2.6" fill="#e5c07b" opacity="0.5"/><rect x="3591.4" y="310.5" width="28.4" height="2.6" fill="#abb2bf" opacity="0.5"/><rect x="3621.8" y="310.5" width="2.0" height="2.6" fill="#c678dd" opacity="0.5"/><rect x="3626.4" y="310.5" width="3.0" height="2.6" fill="#dddddd" opacity="0.9"/><rect x="3629.9" y="310.5" width="10.1" height="2.6" fill="#e5c07b" opacity="0.5"/><rect x="3640.0" y="310.5" width="2.0" height="2.6" fill="#ffd700" opacity="0.5"/><rect x="3642.1" y="310.5" width="20.3" height="2.6" fill="#d19a66" opacity="0.5"/><rect x="3662.4" y="310.5" width="2.0" height="2.6" fill="#ffd700" opacity="0.5"/><rect x="3664.4" y="310.5" width="2.0" height="2.6" fill="#abb2bf" opacity="0.5"/><rect x="3567.0" y="314.5" width="10.1" height="2.6" fill="#c678dd" opacity="0.5"/><rect x="3579.2" y="314.5" width="10.1" height="2.6" fill="#e5c07b" opacity="0.5"/><rect x="3591.4" y="314.5" width="32.5" height="2.6" fill="#abb2bf" opacity="0.5"/><rect x="3625.9" y="314.5" width="2.0" height="2.6" fill="#c678dd" opacity="0.5"/><rect x="3630.4" y="314.5" width="3.0" height="2.6" fill="#dddddd" opacity="0.9"/><rect x="3633.9" y="314.5" width="10.1" height="2.6" fill="#e5c07b" opacity="0.5"/><rect x="3644.1" y="314.5" width="2.0" height="2.6" fill="#ffd700" opacity="0.5"/><rect x="3646.1" y="314.5" width="20.3" height="2.6" fill="#d19a66" opacity="0.5"/><rect x="3666.4" y="314.5" width="2.0" height="2.6" fill="#ffd700" opacity="0.5"/><rect x="3668.4" y="314.5" width="2.0" height="2.6" fill="#abb2bf" opacity="0.5"/><rect x="3567.0" y="322.5" width="18.3" height="2.6" fill="#5c6370" opacity="0.5"/><rect x="3587.3" y="322.5" width="14.2" height="2.6" fill="#5c6370" opacity="0.5"/><rect x="3603.5" y="322.5" width="12.2" height="2.6" fill="#5c6370" opacity="0.5"/><rect x="3567.0" y="326.5" width="10.1" height="2.6" fill="#c678dd" opacity="0.5"/><rect x="3579.2" y="326.5" width="10.1" height="2.6" fill="#e5c07b" opacity="0.5"/><rect x="3591.4" y="326.5" width="32.5" height="2.6" fill="#abb2bf" opacity="0.5"/><rect x="3625.9" y="326.5" width="2.0" height="2.6" fill="#c678dd" opacity="0.5"/><rect x="3630.4" y="326.5" width="3.0" height="2.6" fill="#dddddd" opacity="0.9"/><rect x="3633.9" y="326.5" width="12.2" height="2.6" fill="#e5c07b" opacity="0.5"/><rect x="3646.1" y="326.5" width="30.4" height="2.6" fill="#abb2bf" opacity="0.5"/><rect x="3567.0" y="330.5" width="10.1" height="2.6" fill="#c678dd" opacity="0.5"/><rect x="3579.2" y="330.5" width="10.1" height="2.6" fill="#e5c07b" opacity="0.5"/><rect x="3591.4" y="330.5" width="42.6" height="2.6" fill="#abb2bf" opacity="0.5"/><rect x="3636.0" y="330.5" width="2.0" height="2.6" fill="#c678dd" opacity="0.5"/><rect x="3640.6" y="330.5" width="3.0" height="2.6" fill="#dddddd" opacity="0.9"/><rect x="3644.1" y="330.5" width="12.2" height="2.6" fill="#e5c07b" opacity="0.5"/><rect x="3656.3" y="330.5" width="30.4" height="2.6" fill="#abb2bf" opacity="0.5"/><rect x="3567.0" y="334.5" width="10.1" height="2.6" fill="#c678dd" opacity="0.5"/><rect x="3579.2" y="334.5" width="10.1" height="2.6" fill="#e5c07b" opacity="0.5"/><rect x="3591.4" y="334.5" width="38.6" height="2.6" fill="#abb2bf" opacity="0.5"/><rect x="3632.0" y="334.5" width="2.0" height="2.6" fill="#c678dd" opacity="0.5"/><rect x="3636.5" y="334.5" width="3.0" height="2.6" fill="#dddddd" opacity="0.9"/><rect x="3640.0" y="334.5" width="12.2" height="2.6" fill="#e5c07b" opacity="0.5"/><rect x="3652.2" y="334.5" width="14.2" height="2.6" fill="#abb2bf" opacity="0.5"/><rect x="3666.4" y="334.5" width="22.3" height="2.6" fill="#61afef" opacity="0.5"/><rect x="3688.7" y="334.5" width="2.0" height="2.6" fill="#ffd700" opacity="0.5"/><rect x="3690.8" y="334.5" width="8.1" height="2.6" fill="#d19a66" opacity="0.5"/><rect x="3698.9" y="334.5" width="2.0" height="2.6" fill="#ffd700" opacity="0.5"/><rect x="3700.9" y="334.5" width="2.0" height="2.6" fill="#abb2bf" opacity="0.5"/></svg>
<div class="a" style="left:3799px;top:270px;width:2px;height:1453px;background:#3a3e46"></div>
<div class="a" style="left:3801px;top:270px;width:39px;height:900px;background:#3b414d"></div>
<div class="a" style="left:3801px;top:270px;width:39px;height:6px;background:#4d5a85"></div>
<div class="a" style="left:628px;top:1723px;width:3212px;height:222px;background:#282c34"></div>
<div class="a" style="left:628px;top:1722.5px;width:3212px;height:2px;background:#474a51"></div>
<div class="t" style="left:686.0px;top:1761.9px;font-size:31.4px;color:#9d9fa3;font-weight:normal;font-style:normal;font-family:'Liberation Sans', sans-serif;letter-spacing:-0.49px;">PROBLEMS</div>
<div class="a" style="left:886.5px;top:1751px;width:51.2px;height:51.2px;border-radius:50%;background:#528bff"></div>
<div class="t" style="left:903.5px;top:1760.3px;font-size:31px;color:#e8e8e8;font-weight:normal;font-style:normal;font-family:'Liberation Sans', sans-serif;">1</div>
<div class="t" style="left:1003.0px;top:1761.9px;font-size:31.4px;color:#9d9fa3;font-weight:normal;font-style:normal;font-family:'Liberation Sans', sans-serif;letter-spacing:-0.01px;">OUTPUT</div>
<div class="t" style="left:1204.0px;top:1762.2px;font-size:31.1px;color:#9d9fa3;font-weight:normal;font-style:normal;font-family:'Liberation Sans', sans-serif;letter-spacing:-0.02px;">DEBUG CONSOLE</div>
<div class="t" style="left:1547.0px;top:1761.9px;font-size:31.4px;color:#e7e7e7;font-weight:normal;font-style:normal;font-family:'Liberation Sans', sans-serif;letter-spacing:-0.25px;">TERMINAL</div>
<div class="a" style="left:1540px;top:1806px;width:171px;height:3px;background:#e7e7e7"></div>
<div class="t" style="left:686.0px;top:1863.6px;font-size:34.5px;color:#c8c8c8;font-weight:normal;font-style:normal;font-family:'Liberation Mono', monospace;letter-spacing:-0.7px">priyansh@Priyanshs-Mac-mini eschool % </div>
<div class="a" style="left:1445px;top:1860px;width:21px;height:38px;border:2px solid #c8c8c8"></div>
<svg style="left:0;top:0" width="3840" height="2160"><g fill="none" stroke="#c5c5c5" stroke-width="3"><rect x="3301.5" y="1757.5" width="38" height="38" rx="3"/><path d="M3314 1767 L3325 1777 L3314 1787"/><path d="M3457 1756 V1796 M3437 1776 H3477" stroke-width="3.2"/><path d="M3494 1771 L3505 1782 L3516 1771" stroke-width="2.6"/><rect x="3555.5" y="1757.5" width="36" height="37" rx="3"/><path d="M3573.5 1758 V1794"/><path d="M3629 1763 H3662 M3640 1763 V1757 H3651 V1763 M3633 1764 L3635 1796 H3656 L3658 1764 M3641 1770 V1790 M3646 1770 V1790 M3651 1770 V1790" stroke-width="2.6"/><path d="M3706 1787 L3723.5 1769 L3741 1787"/><path d="M3772 1764 L3798 1790 M3798 1764 L3772 1790"/></g></svg>
<div class="t" style="left:3355.5px;top:1761.1px;font-size:32px;color:#d0d0d0;font-weight:normal;font-style:normal;font-family:'Liberation Sans', sans-serif;">zsh</div>
<div class="a" style="left:0;top:1945px;width:3840px;height:65px;background:#21252b"></div>
<div class="t" style="left:94.0px;top:1959.2px;font-size:35.2px;color:#9da5b4;font-weight:normal;font-style:normal;font-family:'Liberation Sans', sans-serif;letter-spacing:-0.26px;">v-1.0.0</div>
<div class="t" style="left:386.0px;top:1959.2px;font-size:35.2px;color:#9da5b4;font-weight:normal;font-style:normal;font-family:'Liberation Sans', sans-serif;">0</div>
<div class="t" style="left:469.0px;top:1959.2px;font-size:35.2px;color:#9da5b4;font-weight:normal;font-style:normal;font-family:'Liberation Sans', sans-serif;">0</div>
<div class="t" style="left:548.0px;top:1959.2px;font-size:35.2px;color:#9da5b4;font-weight:normal;font-style:normal;font-family:'Liberation Sans', sans-serif;">1</div>
<div class="t" style="left:1901.0px;top:1959.2px;font-size:35.2px;color:#9da5b4;font-weight:normal;font-style:normal;font-family:'Liberation Sans', sans-serif;letter-spacing:0.02px;">Ln 1, Col 40</div>
<div class="t" style="left:2139.5px;top:1959.2px;font-size:35.2px;color:#9da5b4;font-weight:normal;font-style:normal;font-family:'Liberation Sans', sans-serif;letter-spacing:0.19px;">Spaces: 2</div>
<div class="t" style="left:2345.0px;top:1959.2px;font-size:35.2px;color:#9da5b4;font-weight:normal;font-style:normal;font-family:'Liberation Sans', sans-serif;letter-spacing:1.08px;">UTF-8</div>
<div class="t" style="left:2497.0px;top:1959.2px;font-size:35.2px;color:#9da5b4;font-weight:normal;font-style:normal;font-family:'Liberation Sans', sans-serif;letter-spacing:-3.08px;">LF</div>
<div class="t" style="left:2583.0px;top:1959.2px;font-size:35.2px;color:#9da5b4;font-weight:normal;font-style:normal;font-family:'Liberation Sans', sans-serif;letter-spacing:0.51px;">Dart</div>
<div class="t" style="left:2699.0px;top:1959.2px;font-size:35.2px;color:#9da5b4;font-weight:normal;font-style:normal;font-family:'Liberation Sans', sans-serif;letter-spacing:0.34px;">Dart DevTools</div>
<div class="t" style="left:2972.0px;top:1959.2px;font-size:35.2px;color:#9da5b4;font-weight:normal;font-style:normal;font-family:'Liberation Sans', sans-serif;letter-spacing:0.27px;">Flutter: 3.0.1</div>
<div class="t" style="left:3219.0px;top:1959.2px;font-size:35.2px;color:#9da5b4;font-weight:normal;font-style:normal;font-family:'Liberation Sans', sans-serif;letter-spacing:0.81px;">Chrome (web-javascript)</div>
<svg style="left:0;top:0" width="3840" height="2160"><g fill="none" stroke="#9da5b4" stroke-width="3"><circle cx="54.6" cy="1962.8" r="5.6"/><circle cx="54.6" cy="1991" r="5.6"/><circle cx="71.9" cy="1970.2" r="5.6"/><path d="M54.6 1968.4 V1985.4 M71.9 1975.8 C71 1983 60 1979 55.5 1984"/><path d="M262 1987 H258 C251 1987 252 1976 259 1976 C260 1966 276 1965 279 1973 C288 1972 288 1987 280 1987 H276"/><path d="M269 1996 V1977 M262.5 1983 L269 1976.5 L275.5 1983"/><circle cx="355.5" cy="1977" r="16"/><path d="M348 1969.5 L363 1984.5 M363 1969.5 L348 1984.5"/><path d="M437.5 1961 L455 1993 H420 Z" stroke-linejoin="round"/><path d="M437.5 1972 V1983 M437.5 1986 V1989"/><circle cx="518.5" cy="1977" r="16"/><path d="M518.5 1974 V1987 M518.5 1967 V1970"/><circle cx="3683.7" cy="1975.5" r="6.6" stroke-width="2.8"/><path d="M3673 1994 C3673 1978 3694.5 1978 3694.5 1994" stroke-width="2.8"/><path d="M3681.5 1965.5 V1961 H3706 V1976 H3701.5 L3696.5 1981 V1976 H3694" stroke-width="2.8"/><path d="M3765 1981 V1971 C3765 1955 3786 1955 3786 1971 V1981 L3789.5 1987.5 H3761.5 Z" stroke-width="2.8" stroke-linejoin="round"/><path d="M3771.5 1988.5 A4 4 0 0 0 3779.5 1988.5" stroke-width="2.8"/></g></svg>
</div></div>
<div class="a" style="left:0;top:50px;width:3840px;height:1960px;border-radius:20px;border:1px solid #5e5e5e;border-bottom-color:#3a3a3a"></div>
<div class="a" style="left:876.5px;top:2012px;width:2087px;height:138px;border-radius:31px;background:#616161;border:2px solid #7b7b7b"></div>
<div class="a" style="left:897px;top:2032.6px;width:86.5px;height:86.5px;border-radius:19px;background:transparent;overflow:hidden;"><svg width="87" height="87" viewBox="0 0 87 87" style="position:absolute;left:0;top:0"><defs><linearGradient id="fb" x1="0" y1="0" x2="0" y2="1"><stop offset="0" stop-color="#8ccdf8"/><stop offset="1" stop-color="#5865e6"/></linearGradient><linearGradient id="fw" x1="0" y1="0" x2="0" y2="1"><stop offset="0" stop-color="#f5f5f7"/><stop offset="1" stop-color="#d5d8e4"/></linearGradient></defs><rect width="87" height="87" fill="url(#fw)"/><path d="M0 0 H47 C41 14 37 30 36.5 50 H49.5 C49.5 63 51.5 76 54.5 87 H0 Z" fill="url(#fb)"/><rect x="21.5" y="24" width="3.2" height="8" rx="1.6" fill="#222"/><rect x="62" y="24" width="3.2" height="8" rx="1.6" fill="#222"/><path d="M17 57.5 C33 70 55 70 70.5 57.5" fill="none" stroke="#1f1f1f" stroke-width="2.4" stroke-linecap="round"/></svg></div>
<div class="a" style="left:1013px;top:2032.6px;width:86.5px;height:86.5px;border-radius:19px;background:linear-gradient(#d6d6d8,#c4c4c6);overflow:hidden;"><div class="a" style="left:14.0px;top:14.2px;width:16px;height:16px;border-radius:4px;background:linear-gradient(#95e66a,#69c04a)"></div><div class="a" style="left:35.2px;top:14.2px;width:16px;height:16px;border-radius:4px;background:linear-gradient(#f5da5c,#e9b93c)"></div><div class="a" style="left:56.4px;top:14.2px;width:16px;height:16px;border-radius:4px;background:linear-gradient(#eeaa3e,#dc7f2c)"></div><div class="a" style="left:14.0px;top:35.4px;width:16px;height:16px;border-radius:4px;background:linear-gradient(#d9562e,#b03c1c)"></div><div class="a" style="left:35.2px;top:35.4px;width:16px;height:16px;border-radius:4px;background:linear-gradient(#dde2e8,#8e9094)"></div><div class="a" style="left:56.4px;top:35.4px;width:16px;height:16px;border-radius:4px;background:linear-gradient(#e46a70,#d05050)"></div><div class="a" style="left:14.0px;top:56.6px;width:16px;height:16px;border-radius:4px;background:linear-gradient(#b46ff0,#7b3fd0)"></div><div class="a" style="left:35.2px;top:56.6px;width:16px;height:16px;border-radius:4px;background:linear-gradient(#86d6fb,#4a5de8)"></div><div class="a" style="left:56.4px;top:56.6px;width:16px;height:16px;border-radius:4px;background:linear-gradient(#9adcd0,#70c090)"></div></div>
<div class="a" style="left:1129px;top:2032.6px;width:86.5px;height:86.5px;border-radius:19px;background:linear-gradient(#fbfbfa,#efeeea);overflow:hidden;"><div class="a" style="left:0;top:0;width:87px;height:26.5px;background:linear-gradient(#e07a5e,#cd6450)"></div><div class="t" style="left:0;width:87px;text-align:center;top:5.5px;font:bold 17px 'Liberation Sans';color:#fff">JUN</div><svg width="87" height="87" viewBox="0 0 87 87" style="position:absolute;left:0;top:0"><path d="M21.5 41 L34.5 35.5 V73.5 M46 41 L59 35.5 V73.5" fill="none" stroke="#262626" stroke-width="3.6" stroke-linejoin="round"/></svg></div>
<div class="a" style="left:1244.5px;top:2032.6px;width:86.5px;height:86.5px;border-radius:19px;background:linear-gradient(#ffffff,#f3f2ef);overflow:hidden;"><div class="a" style="left:9.3px;top:14.3px;width:14.6px;height:14.6px;border-radius:50%;background:radial-gradient(circle,#4a78ee 0 4.6px,#fff 5px 5.6px,#4a78ee 6px)"></div><div class="a" style="left:32.7px;top:20.6px;width:44.7px;height:2px;background:#a8a8ae"></div><div class="a" style="left:9.3px;top:36.0px;width:14.6px;height:14.6px;border-radius:50%;background:radial-gradient(circle,#dc5434 0 4.6px,#fff 5px 5.6px,#dc5434 6px)"></div><div class="a" style="left:32.7px;top:42.3px;width:44.7px;height:2px;background:#a8a8ae"></div><div class="a" style="left:9.3px;top:57.7px;width:14.6px;height:14.6px;border-radius:50%;background:radial-gradient(circle,#e4a030 0 4.6px,#fff 5px 5.6px,#e4a030 6px)"></div><div class="a" style="left:32.7px;top:64.0px;width:44.7px;height:2px;background:#a8a8ae"></div></div>
<div class="a" style="left:1360px;top:2032.6px;width:86.5px;height:86.5px;border-radius:19px;background:linear-gradient(#f3f2ee,#e6e4de);overflow:hidden;"><div class="a" style="left:0;top:0;width:87px;height:22px;background:linear-gradient(#f5de6e,#efcb45)"></div><div class="a" style="left:0;top:22px;width:87px;height:1px;background:repeating-linear-gradient(90deg,#bbb 0 2px,transparent 2px 4px)"></div><div class="a" style="left:0;top:43px;width:87px;height:1.5px;background:#d4d3ce"></div><div class="a" style="left:0;top:65px;width:87px;height:1.5px;background:#d4d3ce"></div></div>
<div class="a" style="left:1476.7px;top:2032.6px;width:86.5px;height:86.5px;border-radius:19px;background:linear-gradient(#fafafa,#f0f0f0);overflow:hidden;"><svg width="87" height="87" viewBox="0 0 87 87" style="position:absolute;left:0;top:0"><circle cx="43.3" cy="43" r="37.4" fill="#5ba252"/><path d="M43.3 43 L43.3 80.4 A37.4 37.4 0 0 0 75.7 24.3 Z" fill="#e8c043"/><path d="M43.3 43 L10.9 24.3 A37.4 37.4 0 0 1 75.7 24.3 Z" fill="#cf5e3c"/><path d="M43.3 24.7 H75.7 L59 52 Z" fill="#e8c043"/><path d="M27.5 52 L10.9 24.3 L43.3 24.7 Z" fill="#cf5e3c"/><path d="M59 52 L43.3 80.4 L27.5 52 Z" fill="#5ba252"/><circle cx="43.3" cy="43" r="18.3" fill="#fff"/><circle cx="43.3" cy="43" r="14.7" fill="#5c7ce8"/></svg></div>
<div class="a" style="left:1592px;top:2032.6px;width:86.5px;height:86.5px;border-radius:19px;background:linear-gradient(#ffffff,#f4f4f4);overflow:hidden;"><svg width="87" height="87" viewBox="0 0 87 87" style="position:absolute;left:0;top:0" stroke-linecap="round" stroke-width="12.6"><path d="M29.6 25.1 V18.9 A6.3 6.3 0 0 1 42.2 18.9 V25.1 Z" fill="#80bde9"/><path d="M19.8 35 H35.9" stroke="#80bde9"/><path d="M52 18.9 V35" stroke="#6bae7f"/><path d="M61.8 28.9 H68 A6.15 6.15 0 0 1 68 41.2 H61.8 Z" fill="#6bae7f"/><path d="M26.1 44.7 H19.8 A6.3 6.3 0 0 0 19.8 57.3 H26.1 Z" fill="#b8405a"/><path d="M35.9 51 V67.1" stroke="#b8405a"/><path d="M52 51 H68" stroke="#d8b24c"/><path d="M45.7 60.8 V67.1 A6.3 6.3 0 0 0 58.3 67.1 V60.8 Z" fill="#d8b24c"/></svg></div>
<div class="a" style="left:1709.7px;top:2032.6px;width:86.5px;height:86.5px;border-radius:0px;background:transparent;overflow:hidden;overflow:visible"><svg width="87" height="87" viewBox="0 0 87 87" style="position:absolute;left:0;top:0"><defs><linearGradient id="sk" x1="0" y1="0" x2="0" y2="1"><stop offset="0" stop-color="#7ab6ef"/><stop offset="1" stop-color="#4d7fd8"/></linearGradient></defs><circle cx="24.3" cy="23.4" r="23" fill="#5f9ae4"/><circle cx="59.3" cy="65.4" r="25" fill="#4f82d8"/><circle cx="42" cy="43" r="41" fill="url(#sk)"/></svg><div class="t" style="left:0;width:87px;text-align:center;top:12px;font:bold 63px 'Liberation Sans';color:#fff;transform:scaleX(0.78)">S</div></div>
<div class="a" style="left:1824.7px;top:2032.6px;width:86.5px;height:86.5px;border-radius:19px;background:#ffffff;overflow:hidden;"><svg width="87" height="87" viewBox="0 0 87 87" style="position:absolute;left:0;top:0" stroke-linecap="round"><path d="M56 18.5 L15 51.5" stroke="#4a6db8" stroke-width="12.5"/><path d="M56 69 L15 36" stroke="#5a82d2" stroke-width="12.5"/><path d="M56.6 13.3 L73.3 21.5 V65.5 L56.6 74 Z" fill="#6b9be8"/></svg></div>
<div class="a" style="left:1940.7px;top:2032.6px;width:86.5px;height:86.5px;border-radius:0px;background:transparent;overflow:hidden;overflow:visible"><div class="a" style="left:0;top:0;width:86px;height:86px;border-radius:19px;background:linear-gradient(#73b4f0,#4a5cd8)"></div><svg width="87" height="87" viewBox="0 0 87 87" style="position:absolute;left:0;top:0"><rect x="5.5" y="5.5" width="75.5" height="75.5" rx="13" fill="none" stroke="#dbe8ff" stroke-width="1.3"/><circle cx="43" cy="43" r="30" fill="none" stroke="#a8c4f8" stroke-width="0.8"/><g stroke-linecap="round"><path d="M40 19 L22.5 67 M44 19 L63 67 M15.5 47.5 H71" stroke="#e8f0ff" stroke-width="9"/><path d="M40 19 L22.5 67 M44 19 L63 67 M15.5 47.5 H71" stroke="#6f9be8" stroke-width="6"/></g><path d="M66 9 L20.5 82" stroke="#34353b" stroke-width="12.5" stroke-linecap="round"/><path d="M68 6 L54 28" stroke="#505157" stroke-width="11" stroke-linecap="round"/><path d="M37 -10 L50 -13.5 L66 -10.5 L80 -3 L87.5 3 L86 9.5 L80 11 L74 6 L64 7 L54 3 L44 -4 Z" fill="#45464c"/><path d="M84 -1 L89 2 L88 11 L83 11 Z" fill="#2e2f34"/></svg></div>
<div class="a" style="left:2056.7px;top:2032.6px;width:86.5px;height:86.5px;border-radius:19px;background:#ffffff;overflow:hidden;"><svg width="87" height="87" viewBox="0 0 87 87" style="position:absolute;left:0;top:0"><rect width="87" height="87" fill="#301a68"/><path d="M0 67 Q43 62 87 67 V87 H0 Z" fill="#ffffff"/><path d="M57 18 A18 18 0 1 0 61 41" fill="none" stroke="#a456f0" stroke-width="11" stroke-linecap="round"/><circle cx="58" cy="16.5" r="6.7" fill="#e06aa8"/><path d="M33 71 L38 78 L43 72 L48 78 L53 71" fill="none" stroke="#111" stroke-width="4.5"/></svg></div>
<div class="a" style="left:2173.3px;top:2032.6px;width:86.5px;height:86.5px;border-radius:19px;background:transparent;overflow:hidden;"><svg width="87" height="87" viewBox="0 0 87 87" style="position:absolute;left:0;top:0"><defs><linearGradient id="sp" x1="0" y1="0" x2="0" y2="1"><stop offset="0" stop-color="#e2e4e6"/><stop offset="1" stop-color="#8a8a8a"/></linearGradient><radialGradient id="sg"><stop offset="0.5" stop-color="#6a6a6a"/><stop offset="1" stop-color="#3a3a3a"/></radialGradient></defs><rect width="87" height="87" fill="url(#sp)"/><circle cx="43.3" cy="43" r="37" fill="#3a3a3a"/><rect x="42.3" y="7" width="2" height="5" fill="#2a2a2a" transform="rotate(0.0 43.3 43)"/><rect x="42.3" y="7" width="2" height="5" fill="#2a2a2a" transform="rotate(7.5 43.3 43)"/><rect x="42.3" y="7" width="2" height="5" fill="#2a2a2a" transform="rotate(15.0 43.3 43)"/><rect x="42.3" y="7" width="2" height="5" fill="#2a2a2a" transform="rotate(22.5 43.3 43)"/><rect x="42.3" y="7" width="2" height="5" fill="#2a2a2a" transform="rotate(30.0 43.3 43)"/><rect x="42.3" y="7" width="2" height="5" fill="#2a2a2a" transform="rotate(37.5 43.3 43)"/><rect x="42.3" y="7" width="2" height="5" fill="#2a2a2a" transform="rotate(45.0 43.3 43)"/><rect x="42.3" y="7" width="2" height="5" fill="#2a2a2a" transform="rotate(52.5 43.3 43)"/><rect x="42.3" y="7" width="2" height="5" fill="#2a2a2a" transform="rotate(60.0 43.3 43)"/><rect x="42.3" y="7" width="2" height="5" fill="#2a2a2a" transform="rotate(67.5 43.3 43)"/><rect x="42.3" y="7" width="2" height="5" fill="#2a2a2a" transform="rotate(75.0 43.3 43)"/><rect x="42.3" y="7" width="2" height="5" fill="#2a2a2a" transform="rotate(82.5 43.3 43)"/><rect x="42.3" y="7" width="2" height="5" fill="#2a2a2a" transform="rotate(90.0 43.3 43)"/><rect x="42.3" y="7" width="2" height="5" fill="#2a2a2a" transform="rotate(97.5 43.3 43)"/><rect x="42.3" y="7" width="2" height="5" fill="#2a2a2a" transform="rotate(105.0 43.3 43)"/><rect x="42.3" y="7" width="2" height="5" fill="#2a2a2a" transform="rotate(112.5 43.3 43)"/><rect x="42.3" y="7" width="2" height="5" fill="#2a2a2a" transform="rotate(120.0 43.3 43)"/><rect x="42.3" y="7" width="2" height="5" fill="#2a2a2a" transform="rotate(127.5 43.3 43)"/><rect x="42.3" y="7" width="2" height="5" fill="#2a2a2a" transform="rotate(135.0 43.3 43)"/><rect x="42.3" y="7" width="2" height="5" fill="#2a2a2a" transform="rotate(142.5 43.3 43)"/><rect x="42.3" y="7" width="2" height="5" fill="#2a2a2a" transform="rotate(150.0 43.3 43)"/><rect x="42.3" y="7" width="2" height="5" fill="#2a2a2a" transform="rotate(157.5 43.3 43)"/><rect x="42.3" y="7" width="2" height="5" fill="#2a2a2a" transform="rotate(165.0 43.3 43)"/><rect x="42.3" y="7" width="2" height="5" fill="#2a2a2a" transform="rotate(172.5 43.3 43)"/><rect x="42.3" y="7" width="2" height="5" fill="#2a2a2a" transform="rotate(180.0 43.3 43)"/><rect x="42.3" y="7" width="2" height="5" fill="#2a2a2a" transform="rotate(187.5 43.3 43)"/><rect x="42.3" y="7" width="2" height="5" fill="#2a2a2a" transform="rotate(195.0 43.3 43)"/><rect x="42.3" y="7" width="2" height="5" fill="#2a2a2a" transform="rotate(202.5 43.3 43)"/><rect x="42.3" y="7" width="2" height="5" fill="#2a2a2a" transform="rotate(210.0 43.3 43)"/><rect x="42.3" y="7" width="2" height="5" fill="#2a2a2a" transform="rotate(217.5 43.3 43)"/><rect x="42.3" y="7" width="2" height="5" fill="#2a2a2a" transform="rotate(225.0 43.3 43)"/><rect x="42.3" y="7" width="2" height="5" fill="#2a2a2a" transform="rotate(232.5 43.3 43)"/><rect x="42.3" y="7" width="2" height="5" fill="#2a2a2a" transform="rotate(240.0 43.3 43)"/><rect x="42.3" y="7" width="2" height="5" fill="#2a2a2a" transform="rotate(247.5 43.3 43)"/><rect x="42.3" y="7" width="2" height="5" fill="#2a2a2a" transform="rotate(255.0 43.3 43)"/><rect x="42.3" y="7" width="2" height="5" fill="#2a2a2a" transform="rotate(262.5 43.3 43)"/><rect x="42.3" y="7" width="2" height="5" fill="#2a2a2a" transform="rotate(270.0 43.3 43)"/><rect x="42.3" y="7" width="2" height="5" fill="#2a2a2a" transform="rotate(277.5 43.3 43)"/><rect x="42.3" y="7" width="2" height="5" fill="#2a2a2a" transform="rotate(285.0 43.3 43)"/><rect x="42.3" y="7" width="2" height="5" fill="#2a2a2a" transform="rotate(292.5 43.3 43)"/><rect x="42.3" y="7" width="2" height="5" fill="#2a2a2a" transform="rotate(300.0 43.3 43)"/><rect x="42.3" y="7" width="2" height="5" fill="#2a2a2a" transform="rotate(307.5 43.3 43)"/><rect x="42.3" y="7" width="2" height="5" fill="#2a2a2a" transform="rotate(315.0 43.3 43)"/><rect x="42.3" y="7" width="2" height="5" fill="#2a2a2a" transform="rotate(322.5 43.3 43)"/><rect x="42.3" y="7" width="2" height="5" fill="#2a2a2a" transform="rotate(330.0 43.3 43)"/><rect x="42.3" y="7" width="2" height="5" fill="#2a2a2a" transform="rotate(337.5 43.3 43)"/><rect x="42.3" y="7" width="2" height="5" fill="#2a2a2a" transform="rotate(345.0 43.3 43)"/><rect x="42.3" y="7" width="2" height="5" fill="#2a2a2a" transform="rotate(352.5 43.3 43)"/><circle cx="43.3" cy="43" r="31" fill="#8e8e8e"/><circle cx="43.3" cy="43" r="26" fill="#4a4a4a"/><circle cx="43.3" cy="43" r="22" fill="#7a7a7a"/><circle cx="43.3" cy="43" r="15" fill="#5a5a5a"/><path d="M43.3 43 L43.3 17 M43.3 43 L20.8 56 M43.3 43 L65.8 56" stroke="#9a9a9a" stroke-width="4"/><circle cx="43.3" cy="43" r="3" fill="#333"/></svg></div>
<div class="a" style="left:2232.6px;top:2021.8px;width:40.6px;height:40.6px;border-radius:50%;background:#d35b3a"></div>
<div class="t" style="left:2232.6px;width:40.6px;text-align:center;top:2028px;font:30px 'Liberation Sans';color:#fff">2</div>
<div class="a" style="left:2300px;top:2030px;width:2.2px;height:102px;background:#262626"></div>
<div class="a" style="left:2340.3px;top:2032.6px;width:86.5px;height:86.5px;border-radius:19px;background:#da7f45;overflow:hidden;"><svg width="87" height="87" viewBox="0 0 87 87" style="position:absolute;left:0;top:0"><g fill="#fff" stroke="#fff" stroke-linecap="round"><circle cx="64.2" cy="23.4" r="7" stroke="none"/><path d="M61 31 L31 55" stroke-width="13"/><path d="M31 54 L16 73" stroke-width="7.5"/><path d="M12 74 L22 70 L23 75 Z" stroke-width="1"/><path d="M30 45 L21 49 L28 51 Z" stroke-width="1"/></g><path d="M62.5 20.5 L59 24 L64 26" fill="none" stroke="#da7f45" stroke-width="1.6"/><path d="M44 36 L52 46 M38 41 L46 51" stroke="#da7f45" stroke-width="1.2"/></svg></div>
<div class="a" style="left:2468px;top:2030px;width:2.2px;height:102px;background:#262626"></div>
<div class="a" style="left:2501.2px;top:2049.8px;width:101.5px;height:51.8px;background:#fcfcfc"><div class="a" style="left:0;top:0;width:101.5px;height:5px;background:#e8e8ec"></div></div>
<div class="t" style="left:2540px;top:2063px;font:7px 'Liberation Sans';color:#5a7ad8">Google</div>
<div class="a" style="left:2547px;top:2073px;width:28px;height:3px;background:#e0e0e0;border-radius:2px"></div>
<div class="a" style="left:2547px;top:2078px;width:28px;height:8px;background:repeating-linear-gradient(90deg,#c8c8c8 0 3px,transparent 3px 6px)"></div>
<div class="a" style="left:2567.9px;top:2091.7px;width:32px;height:32.3px;border-radius:7px;background:linear-gradient(#ffffff,#f0f0f0);overflow:hidden"><svg width="32" height="32" viewBox="0 0 87 87" style="position:absolute;left:0;top:0"><circle cx="43.3" cy="43" r="37.4" fill="#5ba252"/><path d="M43.3 43 L43.3 80.4 A37.4 37.4 0 0 0 75.7 24.3 Z" fill="#e8c043"/><path d="M43.3 43 L10.9 24.3 A37.4 37.4 0 0 1 75.7 24.3 Z" fill="#cf5e3c"/><path d="M43.3 24.7 H75.7 L59 52 Z" fill="#e8c043"/><path d="M27.5 52 L10.9 24.3 L43.3 24.7 Z" fill="#cf5e3c"/><path d="M59 52 L43.3 80.4 L27.5 52 Z" fill="#5ba252"/><circle cx="43.3" cy="43" r="18.3" fill="#fff"/><circle cx="43.3" cy="43" r="14.7" fill="#5c7ce8"/></svg></div>
<div class="a" style="left:2617.3px;top:2050.4px;width:101.5px;height:51.2px;background:#f7f7f9;overflow:hidden"><div class="a" style="left:0;top:0;width:101.5px;height:2px;background:#4a154b"></div><div class="a" style="left:0;top:0;width:15px;height:52px;background:#3f0e40"></div><div class="a" style="left:22px;top:8px;width:40px;height:24px;background:repeating-linear-gradient(#cfcfd4 0 1px,transparent 1px 4px)"></div><div class="a" style="left:22px;top:36px;width:50px;height:10px;background:repeating-linear-gradient(#cfcfd4 0 1px,transparent 1px 4px)"></div></div>
<div class="a" style="left:2683.8px;top:2091.7px;width:32px;height:32.3px;border-radius:7px;background:linear-gradient(#ffffff,#f0f0f0);overflow:hidden"><svg width="32" height="32" viewBox="0 0 87 87" style="position:absolute;left:0;top:0" stroke-linecap="round" stroke-width="12.6"><path d="M29.6 25.1 V18.9 A6.3 6.3 0 0 1 42.2 18.9 V25.1 Z" fill="#80bde9"/><path d="M19.8 35 H35.9" stroke="#80bde9"/><path d="M52 18.9 V35" stroke="#6bae7f"/><path d="M61.8 28.9 H68 A6.15 6.15 0 0 1 68 41.2 H61.8 Z" fill="#6bae7f"/><path d="M26.1 44.7 H19.8 A6.3 6.3 0 0 0 19.8 57.3 H26.1 Z" fill="#b8405a"/><path d="M35.9 51 V67.1" stroke="#b8405a"/><path d="M52 51 H68" stroke="#d8b24c"/><path d="M45.7 60.8 V67.1 A6.3 6.3 0 0 0 58.3 67.1 V60.8 Z" fill="#d8b24c"/></svg></div>
<div class="a" style="left:2733.2px;top:2050.7px;width:101.5px;height:50.9px;background:#1f232b;overflow:hidden"><div class="a" style="left:0;top:0;width:4px;height:51px;background:#2d323b"></div><div class="a" style="left:6px;top:4px;width:14px;height:40px;background:repeating-linear-gradient(#59606e 0 1px,transparent 1px 3px)"></div><div class="a" style="left:28px;top:6px;width:60px;height:36px;background:repeating-linear-gradient(#3f4552 0 1px,transparent 1px 4px)"></div></div>
<div class="a" style="left:2799.9px;top:2091.7px;width:32px;height:32.3px;border-radius:7px;background:linear-gradient(#ffffff,#f0f0f0);overflow:hidden"><svg width="32" height="32" viewBox="0 0 87 87" style="position:absolute;left:0;top:0" stroke-linecap="round"><path d="M56 18.5 L15 51.5" stroke="#4a6db8" stroke-width="12.5"/><path d="M56 69 L15 36" stroke="#5a82d2" stroke-width="12.5"/><path d="M56.6 13.3 L73.3 21.5 V65.5 L56.6 74 Z" fill="#6b9be8"/></svg></div>
<svg style="left:2860px;top:2026px" width="80" height="98" viewBox="0 0 80 98"><defs><linearGradient id="tr" x1="0" y1="0" x2="1" y2="0"><stop offset="0" stop-color="#cfcfcf"/><stop offset="0.45" stop-color="#f2f2f2"/><stop offset="1" stop-color="#d4d4d4"/></linearGradient></defs><path d="M1.5 12 L11 91 Q12 97 22 97 H58 Q68 97 69 91 L78.5 12 Z" fill="url(#tr)"/><ellipse cx="40" cy="12" rx="38.5" ry="8" fill="#d8d8d8"/><path d="M14 12 L26 2 L36 10 L48 0 L60 9 L70 6 L72 14 Q40 22 10 14 Z" fill="#bfbfbf"/><path d="M30 9 L38 5 L44 12 Z" fill="#6aa8d8"/><path d="M48 6 L58 4 L56 14 Z" fill="#c07a3a"/></svg>
<div class="a" style="left:936px;top:2138px;width:8px;height:8px;border-radius:50%;background:#0a0a0a"></div>
<div class="a" style="left:1400px;top:2138px;width:8px;height:8px;border-radius:50%;background:#0a0a0a"></div>
<div class="a" style="left:1516px;top:2138px;width:8px;height:8px;border-radius:50%;background:#0a0a0a"></div>
<div class="a" style="left:1632px;top:2138px;width:8px;height:8px;border-radius:50%;background:#0a0a0a"></div>
<div class="a" style="left:1864px;top:2138px;width:8px;height:8px;border-radius:50%;background:#0a0a0a"></div>
<div class="a" style="left:1980px;top:2138px;width:8px;height:8px;border-radius:50%;background:#0a0a0a"></div>
</body></html>
